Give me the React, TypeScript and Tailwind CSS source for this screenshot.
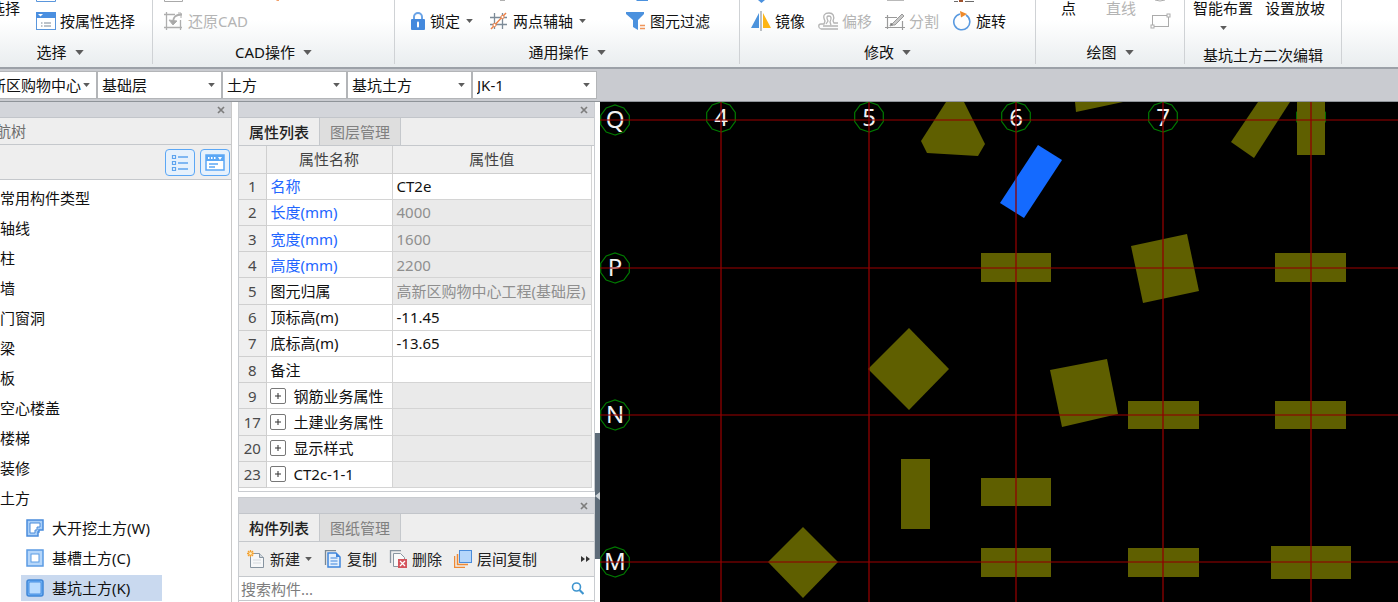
import React from "react";

type Row = {
  no: number;
  name: string;
  value?: string;
  tone?: "link" | "group";
  locked?: boolean;
};

const rows: Row[] = [
  { no: 1, name: "名称", value: "CT2e", tone: "link" },
  { no: 2, name: "长度(mm)", value: "4000", tone: "link", locked: true },
  { no: 3, name: "宽度(mm)", value: "1600", tone: "link", locked: true },
  { no: 4, name: "高度(mm)", value: "2200", tone: "link", locked: true },
  { no: 5, name: "图元归属", value: "高新区购物中心工程(基础层)", locked: true },
  { no: 6, name: "顶标高(m)", value: "-11.45" },
  { no: 7, name: "底标高(m)", value: "-13.65" },
  { no: 8, name: "备注" },
  { no: 9, name: "钢筋业务属性", tone: "group", locked: true },
  { no: 17, name: "土建业务属性", tone: "group", locked: true },
  { no: 20, name: "显示样式", tone: "group", locked: true },
  { no: 23, name: "CT2c-1-1", tone: "group", locked: true },
];

const categories = [
  "常用构件类型",
  "轴线",
  "柱",
  "墙",
  "门窗洞",
  "梁",
  "板",
  "空心楼盖",
  "楼梯",
  "装修",
  "土方",
];

const combos = [
  { label: "楼层", value: "基础层" },
  { label: "构件分类", value: "土方" },
  { label: "构件类型", value: "基坑土方" },
  { label: "构件", value: "JK-1" },
];

// footing outlines in canvas pixels
const footings = [
  "346,0 364,0 385,42 378,54 327,51 321,39",
  "475,0 523,0 476,10",
  "658,0 690,0 654,56 631,40",
  "697,0 725,0 725,53 697,53",
  "381,151 451,151 451,180 381,180",
  "675,151 746,151 746,180 675,180",
  "531,144 587,132 599,189 543,201",
  "309,226 349,267 309,308 268,267",
  "450,268 507,257 518,312 462,325",
  "528,299 599,299 599,327 528,327",
  "675,299 746,299 746,327 675,327",
  "301,357 330,357 330,427 301,427",
  "381,376 451,376 451,404 381,404",
  "381,446 451,446 451,475 381,475",
  "528,446 599,446 599,475 528,475",
  "671,444 751,444 751,477 671,477",
  "203,425 238,460 203,496 168,460",
];

const columnAxes = [
  { name: "4", x: 121 },
  { name: "5", x: 269 },
  { name: "6", x: 416 },
  { name: "7", x: 563 },
  { name: "", x: 711 },
];

const rowAxes = [
  { name: "Q", y: 18 },
  { name: "P", y: 166 },
  { name: "N", y: 313 },
  { name: "M", y: 460 },
];

const decagon = (cx: number, cy: number) =>
  Array.from({ length: 10 }, (_, i) => {
    const a = (i * Math.PI) / 5 + Math.PI / 2;
    return `${(cx + 15 * Math.cos(a)).toFixed(1)},${(cy + 15 * Math.sin(a)).toFixed(1)}`;
  }).join(" ");

const Caret = ({ big = false }: { big?: boolean }) => (
  <svg
    width={big ? 9 : 7}
    height={big ? 5 : 4}
    viewBox="0 0 10 6"
    className="shrink-0"
    aria-hidden="true"
  >
    <path d="M0 0h10L5 6z" fill="#5c5c5c" />
  </svg>
);

const CloseButton = ({ label }: { label: string }) => (
  <button aria-label={label} className="flex h-4 w-4 items-center justify-center">
    <svg width="8" height="8" viewBox="0 0 8 8">
      <path d="M1 1l6 6M7 1L1 7" stroke="#7d7d7d" strokeWidth="1.7" />
    </svg>
  </button>
);

const WindowIcon = () => (
  <svg width="20" height="18" viewBox="0 0 20 18">
    <rect x="0.5" y="0.5" width="19" height="17" fill="#fff" stroke="#5a96dc" />
    <rect width="20" height="6" fill="#4a8fe0" />
    <path d="M2 2h5L4.500 4.500z" fill="#fff" />
    <path d="M5 11h1.500M5 14h1.500M8 11h7M8 14h7" stroke="#7b8794" />
  </svg>
);

const RestoreIcon = () => (
  <svg width="20" height="18" viewBox="0 0 20 18" fill="none" stroke="#aeaeae">
    <path d="M0 2.500h11M2.500 0v18M0 15.500h18M16.500 8v10" strokeWidth="1.300" />
    <path d="M18 2.500c-6 0-9 2-9 9" strokeWidth="1.800" />
    <path d="M5 8l4 5 4-4z" fill="#a8a8a8" />
    <path d="M14 1h3v5" />
  </svg>
);

const LockIcon = () => (
  <svg width="20" height="18" viewBox="0 0 20 18">
    <path d="M8 8V5a4 4 0 0 1 8 0v3" fill="none" stroke="#6aa3e6" strokeWidth="2" />
    <rect x="5" y="7" width="14" height="11" rx="1" fill="#4489dd" />
    <path d="M12 10.500v4" stroke="#fff" strokeWidth="2" strokeLinecap="round" />
  </svg>
);

const AxisIcon = () => (
  <svg width="20" height="18" viewBox="0 0 20 18" fill="none">
    <path d="M1 5.500h17M1 12.500h17M5.500 1v16M13.500 1v16" stroke="#7d8b98" strokeWidth="1.300" />
    <path d="M2 17L17 1" stroke="#ec8148" strokeWidth="1.500" />
    <circle cx="5.500" cy="13" r="1.600" fill="#fff" stroke="#ec8148" />
    <circle cx="13.500" cy="5" r="1.600" fill="#fff" stroke="#ec8148" />
  </svg>
);

const FilterIcon = () => (
  <svg width="20" height="18" viewBox="0 0 20 18">
    <path d="M0 0h18v2l-6 6v10l-5-3V8L0 2z" fill="#4b91de" />
    <path d="M14 13.500h5M14 16.500h5" stroke="#f0955a" strokeWidth="1.500" />
  </svg>
);

const MirrorIcon = () => (
  <svg width="20" height="20" viewBox="0 0 20 20">
    <path d="M8 2v15H0z" fill="#4c93dc" />
    <path d="M12 2v15h8z" fill="#fdb515" />
    <path d="M10 0v20" stroke="#8f979e" strokeWidth="1.200" />
  </svg>
);

const OffsetIcon = () => (
  <svg width="20" height="18" viewBox="0 0 20 18" fill="none" stroke="#b4b4b4" strokeWidth="1.300">
    <path d="M20 17H3c-3-1-3-5 0-5h3l1-3C4 3 7 1 11 1s6 3 4 8l1 2h4" />
    <path d="M20 14H5M8 12l2-3c-2-4-1-5 1-5s3 2 1 6l1 3" />
  </svg>
);

const SplitIcon = () => (
  <svg width="20" height="18" viewBox="0 0 20 18" fill="none" stroke="#9a9a9a">
    <path d="M0 5.500h12M2.500 3v14M0 15.500h20M17.500 9v9" strokeWidth="1.200" />
    <path d="M6 13L17 2l2 2-9 9z" fill="#c9c9c9" />
    <path d="M5 14l3-1-2-2z" fill="#777" />
  </svg>
);

const RotateIcon = () => (
  <svg width="20" height="20" viewBox="0 0 20 20">
    <path d="M14 4a8 8 0 1 1-6-1" fill="none" stroke="#5a9ae0" strokeWidth="1.600" />
    <path d="M8 0l7 3-6 3.500z" fill="#ee8a2c" />
  </svg>
);

type ToolProps = {
  icon: React.ReactNode;
  label: string;
  menu?: boolean;
  disabled?: boolean;
};

const Tool = ({ icon, label, menu, disabled }: ToolProps) => (
  <button
    disabled={disabled}
    className="flex shrink-0 items-center gap-1 disabled:text-[#b4b4b4]"
  >
    {icon}
    {label}
    {menu && (
      <span className="ml-[2px] flex">
        <Caret />
      </span>
    )}
  </button>
);

const Caption = ({ text, menu = true }: { text: string; menu?: boolean }) => (
  <button className="mt-auto flex h-[30px] items-center justify-center gap-2">
    {text}
    {menu && <Caret big />}
  </button>
);

const Group = ({ className, children }: { className: string; children: React.ReactNode }) => (
  <div className={`flex h-[67px] shrink-0 ${className}`}>
    <div className="flex min-w-0 flex-1 flex-col">{children}</div>
    <div className="h-16 w-px bg-[#cfd2d5]" />
  </div>
);

const Ribbon = () => (
  <header className="overflow-hidden border-b-2 border-[#9ca1a8] bg-linear-to-b from-white from-30% to-[#e9edef]">
    <div className="-ml-8 flex">
      <Group className="w-[185px]">
        <div className="flex h-9 gap-4 pl-[22px]">
          <button className="h-4 leading-4">选择</button>
          <div className="flex flex-col">
            <svg width="20" height="6" viewBox="0 0 20 6">
              <path d="M0.500 0v1.500h19V0" fill="none" stroke="#5a96dc" />
            </svg>
            <div className="flex h-[30px] items-center">
              <Tool icon={<WindowIcon />} label="按属性选择" />
            </div>
          </div>
        </div>
        <Caption text="选择" />
      </Group>

      <Group className="w-[242px]">
        <div className="flex h-9 flex-col pl-[11px]">
          <svg width="120" height="6" viewBox="0 0 120 6">
            <path d="M0.500 0v1.500h18V0" fill="none" stroke="#a9a9a9" />
            <path d="M112 0h3v1h-2z" fill="#f2a06a" />
          </svg>
          <div className="flex h-[30px] items-center">
            <Tool icon={<RestoreIcon />} label="还原CAD" disabled />
          </div>
        </div>
        <Caption text="CAD操作" />
      </Group>

      <Group className="w-[345px]">
        <div className="flex h-9 flex-col pl-[11px]">
          <svg width="250" height="6" viewBox="0 0 250 6">
            <path d="M94 0h5v1h-5z" fill="#b0b0b0" />
            <path d="M230 0h12v1h-11z" fill="#4b91de" />
          </svg>
          <div className="flex h-[30px] items-center">
            <Tool icon={<LockIcon />} label="锁定" menu />
            <span className="w-4" />
            <Tool icon={<AxisIcon />} label="两点辅轴" menu />
            <span className="w-10" />
            <Tool icon={<FilterIcon />} label="图元过滤" />
          </div>
        </div>
        <Caption text="通用操作" />
      </Group>

      <Group className="w-[296px]">
        <div className="flex h-9 flex-col pl-[11px]">
          <svg width="230" height="6" viewBox="0 0 230 6">
            <path d="M7 0h7l-3.500 3z" fill="#4b91de" />
            <path d="M136 0h17v1h-17z" fill="#b9b9b9" />
            <path d="M203 1h4v1h-4zM214 1h9v1h-9z" fill="#6b6b6b" />
            <path d="M208 0h4v2h-4z" fill="#a0522d" />
          </svg>
          <div className="flex h-[30px] items-center gap-[13px]">
            <Tool icon={<MirrorIcon />} label="镜像" />
            <Tool icon={<OffsetIcon />} label="偏移" disabled />
            <Tool icon={<SplitIcon />} label="分割" disabled />
            <Tool icon={<RotateIcon />} label="旋转" />
          </div>
        </div>
        <Caption text="修改" />
      </Group>

      <Group className="w-[149px]">
        <div className="flex h-9 items-start pl-[25px]">
          <button className="h-4 leading-4">点</button>
          <button disabled className="ml-[30px] h-4 leading-4 text-[#b4b4b4]">
            直线
          </button>
          <button aria-label="矩形" className="ml-[14px] flex">
            <svg width="22" height="30" viewBox="0 0 22 30" fill="none" stroke="#ababab">
              <path d="M5 0q5 2 10 0" />
              <rect x="2.500" y="15.500" width="16" height="11" />
              <rect x="1" y="25" width="3" height="3" fill="#fff" />
              <rect x="17" y="14" width="3" height="3" fill="#fff" />
            </svg>
          </button>
        </div>
        <Caption text="绘图" />
      </Group>

      <Group className="w-[157px]">
        <div className="flex h-[39px] items-start gap-3 pl-2">
          <button className="flex flex-col items-center gap-[10px]">
            <span className="h-4 leading-4">智能布置</span>
            <Caret />
          </button>
          <button className="h-4 leading-4">设置放坡</button>
        </div>
        <h3 className="flex h-7 items-center justify-center pt-1">基坑土方二次编辑</h3>
      </Group>
    </div>
  </header>
);

type ComboProps = { label: string; value: string; className: string };

const Combo = ({ label, value, className }: ComboProps) => (
  <label className={`relative flex shrink-0 items-center ${className}`}>
    <select
      aria-label={label}
      defaultValue={value}
      className="h-[26px] w-full appearance-none bg-white pl-1 outline outline-[#b3b5b8]"
    >
      <option>{value}</option>
    </select>
    <span className="pointer-events-none absolute right-[6px]">
      <Caret />
    </span>
  </label>
);

const ListIcon = () => (
  <svg width="18" height="18" viewBox="0 0 18 18" fill="none" stroke="#5ea4ee">
    <path d="M1.500 1.500h3v3h-3zM1.500 7.500h3v3h-3zM1.500 13.500h3v3h-3z" strokeWidth="1.200" />
    <path d="M7 3h10M7 9h10M7 15h10" strokeWidth="1.300" />
  </svg>
);

const CardIcon = () => (
  <svg width="20" height="18" viewBox="0 0 20 18">
    <rect x="1" y="1" width="18" height="15" fill="#fff" stroke="#5ba7f5" strokeWidth="1.500" />
    <rect x="1" y="1" width="18" height="6" fill="#5ba7f5" />
    <path d="M3 4h1.500M6 4h1.500M9 4h1.500" stroke="#fff" strokeWidth="2" />
    <path d="M13 3h4l-2 3z" fill="#fff" />
    <path d="M4 10h9M4 13h6" stroke="#5ba7f5" strokeWidth="1.300" />
  </svg>
);

const earthworks = [
  {
    label: "大开挖土方(W)",
    icon: (
      <svg width="18" height="18" viewBox="0 0 18 18">
        <path d="M1 1h16v10h-4v2h-1v4H1z" fill="#a9cff8" stroke="#4a8cdb" strokeWidth="1.500" />
        <path d="M4 4h10v4h-3v3H9v3H4z" fill="#fff" stroke="#4a8cdb" />
      </svg>
    ),
  },
  {
    label: "基槽土方(C)",
    icon: (
      <svg width="18" height="18" viewBox="0 0 18 18">
        <rect x="1" y="1" width="16" height="16" fill="#b5d6fa" stroke="#5b9be3" strokeWidth="1.500" />
        <rect x="5" y="5" width="8" height="8" fill="#fff" stroke="#5b9be3" />
      </svg>
    ),
  },
  {
    label: "基坑土方(K)",
    active: true,
    icon: (
      <svg width="18" height="18" viewBox="0 0 18 18">
        <rect x="1" y="1" width="16" height="16" rx="2" fill="#6cb0f5" stroke="#3f86d8" strokeWidth="1.500" />
        <rect x="3" y="3" width="12" height="12" rx="1" fill="#b9dcff" stroke="#4a90e2" />
      </svg>
    ),
  },
];

const NavTree = () => (
  <nav className="flex w-[232px] shrink-0 flex-col overflow-hidden border-r border-[#c9c9c9] bg-white">
    <div className="flex h-4 shrink-0 items-center justify-end border-b border-[#c2c5ca] bg-[#d3d5da] pr-[2px]">
      <CloseButton label="关闭导航树" />
    </div>
    <div className="flex h-[27px] shrink-0 items-center border-b border-[#c5c8cc] bg-[#eee] text-[#6f6f6f]">
      <h2 className="-ml-[19px]">导航树</h2>
    </div>
    <div className="flex h-[35px] shrink-0 items-center justify-end gap-[5px] border-b border-[#c5c8cc] bg-[#eee] pt-px pr-px">
      <button
        aria-label="列表视图"
        className="flex h-[27px] w-[30px] items-center justify-center rounded-sm border border-[#5ba7f5] bg-[#e6f1fc]"
      >
        <ListIcon />
      </button>
      <button
        aria-label="卡片视图"
        className="flex h-[27px] w-[30px] items-center justify-center rounded-sm border border-[#5ba7f5] bg-[#e6f1fc]"
      >
        <CardIcon />
      </button>
    </div>
    <ul className="mt-[3px]">
      {categories.map((name) => (
        <li key={name} className="h-[30px]">
          <button className="flex h-full items-center">{name}</button>
        </li>
      ))}
      {earthworks.map((item) => (
        <li key={item.label} className="flex h-[30px] items-center pl-[21px]">
          <button
            className={`flex h-[26px] w-[141px] items-center gap-2 pl-[5px] ${
              item.active ? "bg-[#c9d9ef]" : ""
            }`}
          >
            {item.icon}
            {item.label}
          </button>
        </li>
      ))}
    </ul>
  </nav>
);

type HeadProps = { active: string; other: string };

const PanelHead = ({ active, other }: HeadProps) => (
  <>
    <div className="flex h-4 shrink-0 items-center justify-end border-b border-[#c2c5ca] bg-[#d3d5da] pr-[2px]">
      <CloseButton label={`关闭${active}`} />
    </div>
    <div className="flex h-7 shrink-0 border-b border-[#c5c8cc] bg-[#eee]">
      <button className="w-[81px] border-r border-[#c5c8cc] font-medium text-[#222]">
        {active}
      </button>
      <button className="w-[81px] border-r border-[#c5c8cc] bg-[#dedede] text-[#808080]">
        {other}
      </button>
    </div>
  </>
);

const PropertyTable = () => (
  <table className="h-[342px] w-[353px] table-fixed border-collapse bg-[#efefef]">
    <colgroup>
      <col className="w-[27px]" />
      <col className="w-[126px]" />
      <col />
    </colgroup>
    <thead>
      <tr className="h-[27px] text-[#444]">
        <th className="border-r border-b border-[#cfcfcf]" />
        <th className="border-r border-b border-[#cfcfcf] font-normal">属性名称</th>
        <th className="border-r border-b border-[#cfcfcf] font-normal">属性值</th>
      </tr>
    </thead>
    <tbody>
      {rows.map((row) => (
        <tr key={row.no} className="h-[26px]">
          <td className="border-r border-b border-[#cfcfcf] text-center text-[#4a4a4a]">
            {row.no}
          </td>
          <td
            className={`border-r border-b border-[#d4d4d4] bg-white pl-1 whitespace-nowrap ${
              row.tone === "link" ? "text-[#2266ff]" : ""
            }`}
          >
            {row.tone === "group" ? (
              <div className="flex items-center gap-2">
                <button
                  aria-label={`展开${row.name}`}
                  className="-ml-px flex h-4 w-4 items-center justify-center rounded-xs border border-[#777]"
                >
                  <svg width="6" height="6" viewBox="0 0 7 7">
                    <path d="M0 3.500h7M3.500 0v7" stroke="#333" strokeWidth="1.200" />
                  </svg>
                </button>
                {row.name}
              </div>
            ) : (
              row.name
            )}
          </td>
          <td
            className={`border-r border-b border-[#d4d4d4] pl-1 whitespace-nowrap ${
              row.locked ? "bg-[#eaeaea] text-[#8f8f8f]" : "bg-white"
            }`}
          >
            {row.value}
          </td>
        </tr>
      ))}
    </tbody>
  </table>
);

const NewIcon = () => (
  <svg width="18" height="18" viewBox="0 0 18 18">
    <path d="M3.500 3.500h9l4 4v10h-13z" fill="#f6f7f8" stroke="#8794a0" />
    <path d="M12.500 3.500v4h4" fill="#cfd6dc" stroke="#8794a0" />
    <path d="M6 10h8M6 13h8" stroke="#d5d9dd" />
    <path d="M3.500 0v7M0 3.500h7M1 1l5 5M6 1L1 6" stroke="#f3a02f" strokeWidth="1.300" />
    <circle cx="3.500" cy="3.500" r="1.300" fill="#fff3c9" />
  </svg>
);

const CopyIcon = () => (
  <svg width="18" height="18" viewBox="0 0 18 18">
    <path d="M1.500 15V0.500H12" fill="none" stroke="#7a8792" strokeWidth="1.300" />
    <path d="M4 3h8l4 4v10H4z" fill="#e4f0fd" stroke="#3f85dc" strokeWidth="1.500" />
    <path d="M12 3v4h4" fill="#3f85dc" />
    <path d="M6.500 8h7M6.500 11h7M6.500 14h7" stroke="#3f85dc" />
  </svg>
);

const DeleteIcon = () => (
  <svg width="18" height="18" viewBox="0 0 18 18">
    <path d="M1.500 13V0.500H12" fill="none" stroke="#8a96a1" strokeWidth="1.300" />
    <path d="M4.500 16.500v-13h7l4 4v9z" fill="#fafafa" stroke="#8a96a1" />
    <rect x="9" y="9" width="9" height="9" fill="#d4545c" />
    <path d="M11 11l5 5M16 11l-5 5" stroke="#fff" strokeWidth="1.300" />
  </svg>
);

const LayerIcon = () => (
  <svg width="18" height="18" viewBox="0 0 18 18">
    <path d="M0.500 6v11.500H11M3.500 4v10.500H14" fill="none" stroke="#ef8a36" strokeWidth="1.500" />
    <rect x="5.500" y="0.500" width="12" height="12" fill="#b5d6fb" stroke="#4a8cdb" />
  </svg>
);

const PanelTool = ({ icon, label, menu }: ToolProps) => (
  <button className="flex shrink-0 items-center gap-[5px]">
    {icon}
    {label}
    {menu && <Caret />}
  </button>
);

const Properties = () => (
  <div className="ml-[6px] flex w-[357px] shrink-0 flex-col bg-white">
    <section className="flex h-[390px] shrink-0 flex-col border-x border-b border-[#c9ccd0]">
      <PanelHead active="属性列表" other="图层管理" />
      <PropertyTable />
    </section>
    <section className="mt-[5px] flex flex-1 flex-col border-x border-t border-[#c9ccd0]">
      <PanelHead active="构件列表" other="图纸管理" />
      <div className="flex h-[35px] shrink-0 items-center gap-3 border-b border-[#c5c8cc] bg-[#eee] pr-1 pl-2 text-[#222]">
        <PanelTool icon={<NewIcon />} label="新建" menu />
        <PanelTool icon={<CopyIcon />} label="复制" />
        <PanelTool icon={<DeleteIcon />} label="删除" />
        <PanelTool icon={<LayerIcon />} label="层间复制" />
        <button aria-label="更多" className="ml-auto">
          <svg width="9" height="6" viewBox="0 0 9 6">
            <path d="M0 0l4 3-4 3zM5 0l4 3-4 3z" fill="#333" />
          </svg>
        </button>
      </div>
      <div className="flex h-6 shrink-0 items-center border-b border-[#c5c8cc] pr-[10px]">
        <input
          type="search"
          aria-label="搜索构件"
          placeholder="搜索构件..."
          className="h-full min-w-0 flex-1 pl-[2px] outline-none placeholder:text-[#7d7d7d]"
        />
        <svg width="13" height="13" viewBox="0 0 13 13" fill="none" stroke="#3f95cf">
          <circle cx="5.500" cy="5" r="4" strokeWidth="1.600" />
          <path d="M8.500 8l4 4" strokeWidth="2.200" />
        </svg>
      </div>
    </section>
  </div>
);

const Splitter = () => (
  <div className="flex w-[5px] shrink-0 flex-col bg-white pt-[331px]">
    <button
      aria-label="收起面板"
      className="flex h-[126px] items-center bg-[#5d6b78]"
    >
      <svg width="5" height="8" viewBox="0 0 5 8">
        <path d="M5 0v8L0 4z" fill="#cdd3d8" />
      </svg>
    </button>
  </div>
);

const Drawing = () => (
  <main className="min-w-0 flex-1 bg-black">
    <svg className="block h-full w-full" role="img" aria-label="基础层平面图">
      <g fill="none" stroke="#007a00" strokeWidth="1.200">
        {columnAxes.map((a) => (
          <polygon key={a.x} points={decagon(a.x, 15)} />
        ))}
        {rowAxes.map((a) => (
          <polygon key={a.y} points={decagon(15, a.y)} />
        ))}
      </g>
      <g fill="#5f5f00">
        {footings.map((points) => (
          <polygon key={points} points={points} />
        ))}
      </g>
      <polygon points="438,43 462,58 424,116 400,101" fill="#146aff" />
      <g
        fill="#f2f2f2"
        fontSize="24"
        textAnchor="middle"
        className="font-['Noto_Sans',sans-serif]"
      >
        {columnAxes.map((a) => (
          <text key={a.x} x={a.x} y="24">
            {a.name}
          </text>
        ))}
        {rowAxes.map((a) => (
          <text key={a.y} x="15" y={a.y + 8}>
            {a.name}
          </text>
        ))}
      </g>
      <g stroke="#900000">
        {rowAxes.map((a) => (
          <line key={a.y} x1="0" x2="100%" y1={a.y} y2={a.y} strokeWidth="2" opacity="0.55" />
        ))}
        {columnAxes.map((a) => (
          <line key={a.x} x1={a.x} x2={a.x} y1="0" y2="100%" strokeWidth="2" opacity="0.65" />
        ))}
      </g>
    </svg>
  </main>
);

export default function App() {
  return (
    <div className="flex h-screen flex-col overflow-hidden bg-[#c9cbd0] font-['Noto_Sans','Noto_Sans_CJK_SC',sans-serif] text-[15px] leading-5 text-[#111]">
      <Ribbon />
      <div className="flex h-[33px] shrink-0 items-center overflow-hidden border-b border-[#8f9499]">
        <div className="-ml-[13px] flex gap-[2px]">
          <Combo label="工程" value="新区购物中心" className="w-[109px]" />
          {combos.map((c) => (
            <Combo key={c.label} {...c} className="w-[123px]" />
          ))}
        </div>
      </div>
      <div className="flex min-h-0 flex-1 bg-white">
        <NavTree />
        <Properties />
        <Splitter />
        <Drawing />
      </div>
    </div>
  );
}
